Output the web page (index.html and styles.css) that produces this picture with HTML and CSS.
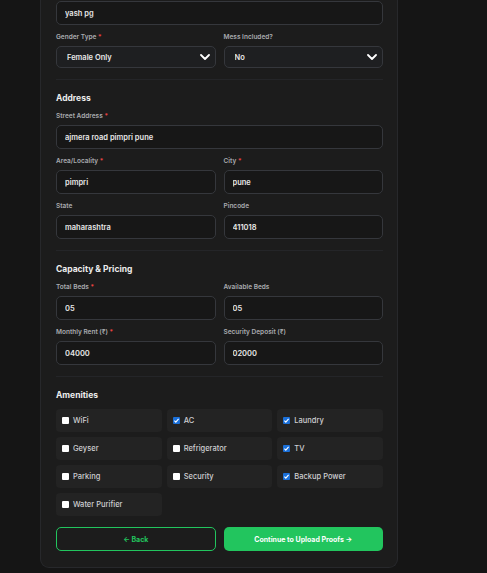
FILE: index.html
```html
<!DOCTYPE html>
<html>
<head>
  <title>List your PG - Details</title>
  <meta charset="UTF-8">
  <link rel="stylesheet" href="styles.css">
</head>
<body>
  <div class="card">
    <!-- 基本信息 -->
    <div class="section section-first">
      <input type="text" class="text-input" value="yash pg">
      <div class="field-row">
        <div class="field">
          <label class="field-label">Gender Type <span class="req">*</span></label>
          <div class="select-wrap">
            <select class="select-input">
              <option>Female Only</option>
            </select>
            <svg class="chevron" viewBox="0 0 10 6" width="10" height="6"><path d="M1 1l4 4 4-4" fill="none" stroke="#fff" stroke-width="1.8" stroke-linecap="round" stroke-linejoin="round"/></svg>
          </div>
        </div>
        <div class="field">
          <label class="field-label">Mess Included?</label>
          <div class="select-wrap">
            <select class="select-input">
              <option>No</option>
            </select>
            <svg class="chevron" viewBox="0 0 10 6" width="10" height="6"><path d="M1 1l4 4 4-4" fill="none" stroke="#fff" stroke-width="1.8" stroke-linecap="round" stroke-linejoin="round"/></svg>
          </div>
        </div>
      </div>
    </div>

    <!-- 地址 -->
    <div class="section">
      <h4 class="section-title">Address</h4>
      <label class="field-label">Street Address <span class="req">*</span></label>
      <input type="text" class="text-input" value="ajmera road pimpri pune">
      <div class="field-row">
        <div class="field">
          <label class="field-label">Area/Locality <span class="req">*</span></label>
          <input type="text" class="text-input" value="pimpri">
        </div>
        <div class="field">
          <label class="field-label">City <span class="req">*</span></label>
          <input type="text" class="text-input" value="pune">
        </div>
      </div>
      <div class="field-row">
        <div class="field">
          <label class="field-label">State</label>
          <input type="text" class="text-input" value="maharashtra">
        </div>
        <div class="field">
          <label class="field-label">Pincode</label>
          <input type="text" class="text-input" value="411018">
        </div>
      </div>
    </div>

    <!-- 容量与价格 -->
    <div class="section">
      <h4 class="section-title">Capacity &amp; Pricing</h4>
      <div class="field-row field-row-first">
        <div class="field">
          <label class="field-label">Total Beds <span class="req">*</span></label>
          <input type="text" class="text-input" value="05">
        </div>
        <div class="field">
          <label class="field-label">Available Beds</label>
          <input type="text" class="text-input" value="05">
        </div>
      </div>
      <div class="field-row">
        <div class="field">
          <label class="field-label">Monthly Rent (₹) <span class="req">*</span></label>
          <input type="text" class="text-input" value="04000">
        </div>
        <div class="field">
          <label class="field-label">Security Deposit (₹)</label>
          <input type="text" class="text-input" value="02000">
        </div>
      </div>
    </div>

    <!-- 设施 -->
    <div class="section section-last">
      <h4 class="section-title amenities-title">Amenities</h4>
      <div class="amenities">
        <div class="amenity"><span class="check"></span>WiFi</div>
        <div class="amenity"><span class="check checked"><svg viewBox="0 0 8 8" width="7" height="7"><path d="M1.6 4.2l1.6 1.6 3.2-3.6" fill="none" stroke="#fff" stroke-width="1.3"/></svg></span>AC</div>
        <div class="amenity"><span class="check checked"><svg viewBox="0 0 8 8" width="7" height="7"><path d="M1.6 4.2l1.6 1.6 3.2-3.6" fill="none" stroke="#fff" stroke-width="1.3"/></svg></span>Laundry</div>
        <div class="amenity"><span class="check"></span>Geyser</div>
        <div class="amenity"><span class="check"></span>Refrigerator</div>
        <div class="amenity"><span class="check checked"><svg viewBox="0 0 8 8" width="7" height="7"><path d="M1.6 4.2l1.6 1.6 3.2-3.6" fill="none" stroke="#fff" stroke-width="1.3"/></svg></span>TV</div>
        <div class="amenity"><span class="check"></span>Parking</div>
        <div class="amenity"><span class="check"></span>Security</div>
        <div class="amenity"><span class="check checked"><svg viewBox="0 0 8 8" width="7" height="7"><path d="M1.6 4.2l1.6 1.6 3.2-3.6" fill="none" stroke="#fff" stroke-width="1.3"/></svg></span>Backup Power</div>
        <div class="amenity"><span class="check"></span>Water Purifier</div>
      </div>

      <div class="action-buttons">
        <button class="btn btn-outline">← Back</button>
        <button class="btn btn-success">Continue to Upload Proofs →</button>
      </div>
    </div>
  </div>
</body>
</html>
```
FILE: styles.css
```css
body {
  font-family: Inter, "Noto Sans", sans-serif;
  margin: 0;
  background: #151515;
  color: #e6e6e6;
}

.card {
  width: 327px;
  margin-left: 40px;
  padding: 1px 14px 16px 15px;
  background: #1c1c1c;
  border: 1px solid #27282b;
  border-top: none;
  border-radius: 0 0 9px 9px;
}

.section {
  padding: 12px 0 11px 0;
  border-bottom: 1px solid #242528;
}

.section-first {
  padding-top: 0;
}

.section-last {
  border-bottom: none;
  padding-bottom: 0;
}

.section-title {
  margin: 0 0 7px 0;
  font-size: 8.5px;
  line-height: 12px;
  font-weight: 700;
  color: #ececec;
}

.amenities-title {
  margin-bottom: 8px;
}

.field-row {
  display: grid;
  grid-template-columns: 1fr 1fr;
  gap: 8px;
  margin-top: 7px;
}

.field-row-first {
  margin-top: 0;
}

.field {
  min-width: 0;
}

.field-label {
  display: block;
  font-size: 6.5px;
  line-height: 10px;
  font-weight: 600;
  color: #a9abaf;
  margin-bottom: 4px;
}

.req {
  color: #ef4444;
}

.text-input,
.select-input {
  display: block;
  box-sizing: border-box;
  width: 100%;
  height: 24px;
  padding: 0 8px;
  background: #171717;
  border: 1px solid #35373c;
  border-radius: 5px;
  font-family: inherit;
  font-size: 7.5px;
  font-weight: 600;
  color: #e8e8e8;
  outline: none;
}

.select-wrap {
  position: relative;
}

.select-input {
  height: 22px;
  padding-left: 10px;
  background: #1e1f21;
  appearance: none;
  -webkit-appearance: none;
}

.chevron {
  position: absolute;
  right: 6px;
  top: 8px;
  pointer-events: none;
}

.amenities {
  display: grid;
  grid-template-columns: repeat(3, 1fr);
  gap: 5px;
}

.amenity {
  display: flex;
  align-items: center;
  gap: 4px;
  height: 23px;
  padding-left: 6px;
  background: #232323;
  border-radius: 4px;
  font-size: 7.5px;
  font-weight: 500;
  color: #cfcfd2;
}

.check {
  display: flex;
  align-items: center;
  justify-content: center;
  width: 7px;
  height: 7px;
  background: #fff;
  border-radius: 1px;
}

.check.checked {
  background: #1a6fd8;
}

.action-buttons {
  display: grid;
  grid-template-columns: 1fr 1fr;
  gap: 8px;
  margin-top: 11px;
}

.btn {
  height: 24px;
  border-radius: 5px;
  font-family: inherit;
  font-size: 7px;
  font-weight: 700;
  cursor: pointer;
}

.btn-outline {
  background: transparent;
  border: 1px solid #22c55e;
  color: #22c55e;
}

.btn-success {
  background: #22c55e;
  border: none;
  color: #fff;
}
```
